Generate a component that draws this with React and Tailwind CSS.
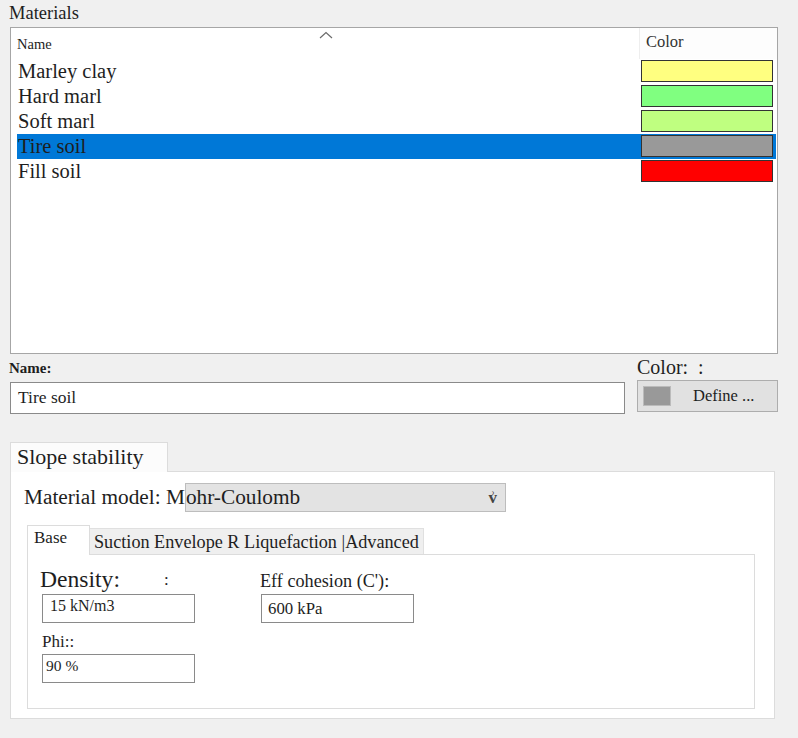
const materials = [
  { name: "Marley clay", color: "#ffff80" },
  { name: "Hard marl", color: "#80ff80" },
  { name: "Soft marl", color: "#bfff80" },
  { name: "Tire soil", color: "#999999", selected: true },
  { name: "Fill soil", color: "#ff0000" },
];

function Field({ label, value, labelClass, valueClass }) {
  return (
    <div className="flex w-[153px] flex-col">
      <div className={labelClass}>{label}</div>
      <div className="h-[29px] w-[153px] border border-[#8a8a8a] bg-white">
        <div className={valueClass}>{value}</div>
      </div>
    </div>
  );
}

export default function App() {
  return (
    <div className="h-[738px] w-[798px] overflow-hidden bg-[#f0f0f0] pl-[10px] pt-[1px] font-[family-name:'Liberation_Serif',serif] text-[#1e1e1e]">
      <div className="-ml-px text-[18.5px] leading-[24px]">Materials</div>

      {/* material list */}
      <div className="mt-[2px] h-[327px] w-[768px] border border-[#a6a6a6] bg-white">
        <div className="relative flex h-[31px]">
          <div className="flex-1 pl-[6px] pt-[7px] text-[14.5px] leading-[18px]">Name</div>
          {/* sort arrow */}
          <svg className="absolute left-[308px] top-[3px]" width="14" height="8" viewBox="0 0 14 8">
            <polyline points="1,7 7,1.5 13,7" fill="none" stroke="#6b6b6b" strokeWidth="1.2" />
          </svg>
          <div className="w-[138px] border-l border-[#eeeeee] bg-[#fdfdfd] pl-[6px] pt-[4px] text-[16.5px] leading-[20px] text-[#333]">Color</div>
        </div>
        {materials.map((m) => (
          <div
            key={m.name}
            className={
              m.selected
                ? "ml-[6px] mr-px flex h-[25px] bg-[#0078d7]"
                : "ml-[6px] mr-px flex h-[25px]"
            }
          >
            <div className="flex-1 pl-[1px] text-[20.5px] leading-[24px]">{m.name}</div>
            <div
              className="mr-[3px] mt-px h-[22px] w-[132px] border border-[#333]"
              style={{ background: m.color }}
            />
          </div>
        ))}
      </div>

      {/* name / color */}
      <div className="flex gap-[12px]">
        <div className="w-[615px]">
          <div className="-ml-px h-[28px] pt-[5px] text-[15px] font-bold leading-[18px]">Name:</div>
          <div className="h-[32px] border border-[#8a8a8a] bg-white pl-[7px] pt-[4px] text-[17.5px] leading-[20px]">
            Tire soil
          </div>
        </div>
        <div className="w-[141px]">
          <div className="h-[26px] pt-[3px] text-[20px] leading-[20px]">Color:&nbsp; :</div>
          <div className="flex h-[32px] items-center border border-[#adadad] bg-[#e1e1e1] pl-[5px]">
            <div className="h-[20px] w-[28px] border border-[#bbb] bg-[#999999]" />
            <span className="ml-[22px] text-[16.5px]">Define ...</span>
          </div>
        </div>
      </div>

      {/* slope stability */}
      <div className="relative z-10 mt-[28px] h-[30px] w-[158px] -mb-px border border-b-0 border-[#dcdcdc] bg-[#fcfcfc] pl-[6px] pt-[2px] text-[22px] leading-[24px]">
        Slope stability
      </div>
      <div className="h-[248px] w-[765px] border border-[#dcdcdc] bg-white">
        <div className="flex items-center pl-[13px] pt-[11px]">
          <span className="text-[21.3px] leading-[29px]">Material model: M</span>
          <div className="flex h-[29px] w-[321px] items-center justify-between border border-[#bdbdbd] bg-[#e3e3e3] pr-[8px] text-[21.3px]">
            <span>ohr-Coulomb</span>
            <span className="text-[17px] font-bold text-[#444]">v&#x0357;</span>
          </div>
        </div>

        {/* inner tabs */}
        <div className="ml-[16px] mt-[13px] flex items-end">
          <div className="relative z-10 -mb-px h-[30px] w-[63px] border border-b-0 border-[#dcdcdc] bg-white pl-[6px] pt-[2px] text-[17px] leading-[20px]">
            Base
          </div>
          <div className="flex h-[26px] w-[334px] items-center border-t border-r border-[#e0e0e0] bg-[#efefef] pl-[4px] text-[18.2px] leading-[20px]">
            Suction Envelope R Liquefaction |Advanced
          </div>
        </div>
        <div className="ml-[16px] h-[155px] w-[728px] border border-[#dcdcdc] bg-white pl-[14px] pt-[11px]">
          <div className="flex gap-[66px]">
            <Field
              label={<span className="flex items-end"><span className="-ml-[2px] text-[23.6px] leading-[26px]">Density:</span><span className="ml-[44px] text-[17px]">:</span></span>}
              labelClass="h-[28px]"
              value="15 kN/m3"
              valueClass="pl-[7px] pt-[1px] text-[16px] leading-[20px]"
            />
            <Field
              label="Eff cohesion (C'):"
              labelClass="-ml-px h-[28px] pt-[5px] text-[18.2px] leading-[21px]"
              value="600 kPa"
              valueClass="pl-[6px] pt-[4px] text-[16.8px] leading-[20px]"
            />
          </div>
          <div className="mt-[9px]">
            <Field
              label="Phi::"
              labelClass="h-[22px] text-[17px] leading-[20px]"
              value="90 %"
              valueClass="pl-[3px] pt-[2px] text-[15.5px] leading-[18px]"
            />
          </div>
        </div>
      </div>
    </div>
  );
}
